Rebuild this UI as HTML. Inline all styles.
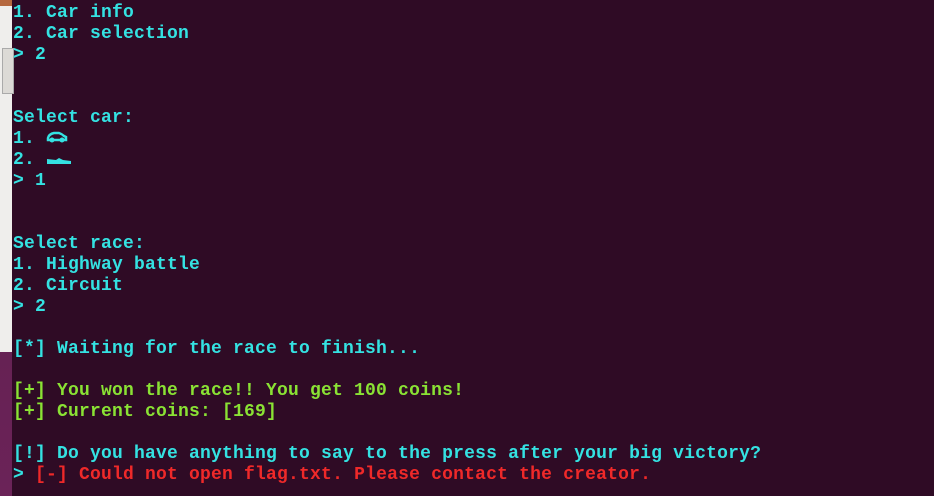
<!DOCTYPE html>
<html><head><style>
body{margin:0;width:934px;height:496px;overflow:hidden;background:#2f0b25;position:relative}
#left{position:absolute;left:0;top:0;width:12px;height:496px;background:linear-gradient(#5a1e4a,#6b2358)}
#lw{position:absolute;left:0;top:0;width:12px;height:352px;background:#efeeec}
#lw .t{position:absolute;left:0;top:0;width:12px;height:6px;background:#b5683e}
#lw .b{position:absolute;left:2px;top:48px;width:10px;height:44px;background:#dcdad6;border:1px solid #aaa}
pre{position:absolute;left:13px;top:3px;margin:0;font:bold 18px/21px "Liberation Mono",monospace;letter-spacing:0.2px;color:#34e2e2;white-space:pre}
.g{color:#8ae234}.r{color:#ef2929}
</style></head><body>
<div id="left"></div>
<div id="lw"><div class="t"></div><div class="b"></div></div>
<pre>1. Car info
2. Car selection
&gt; 2


Select car:
1. <svg width="22" height="13" viewBox="0 0 22 13" style="vertical-align:-1px"><path d="M2 7 Q3 3 8 2 L13 2 Q16 3 18 5 L20 6 L20 9 L2 9 Z" fill="none" stroke="#34e2e2" stroke-width="2.5"/><circle cx="6" cy="9" r="2.5" fill="#34e2e2"/><circle cx="16" cy="9" r="2.5" fill="#34e2e2"/></svg>
2. <svg width="26" height="10" viewBox="0 0 26 10" style="vertical-align:-2px"><path d="M1 3 L10 4 L13 2 L17 4 L25 5 L25 8 L1 8 Z" fill="#34e2e2"/></svg>
&gt; 1


Select race:
1. Highway battle
2. Circuit
&gt; 2

[*] Waiting for the race to finish...

<span class="g">[+] You won the race!! You get 100 coins!
[+] Current coins: [169]</span>

[!] Do you have anything to say to the press after your big victory?
&gt; <span class="r">[-] Could not open flag.txt. Please contact the creator.</span></pre>
</body></html>
